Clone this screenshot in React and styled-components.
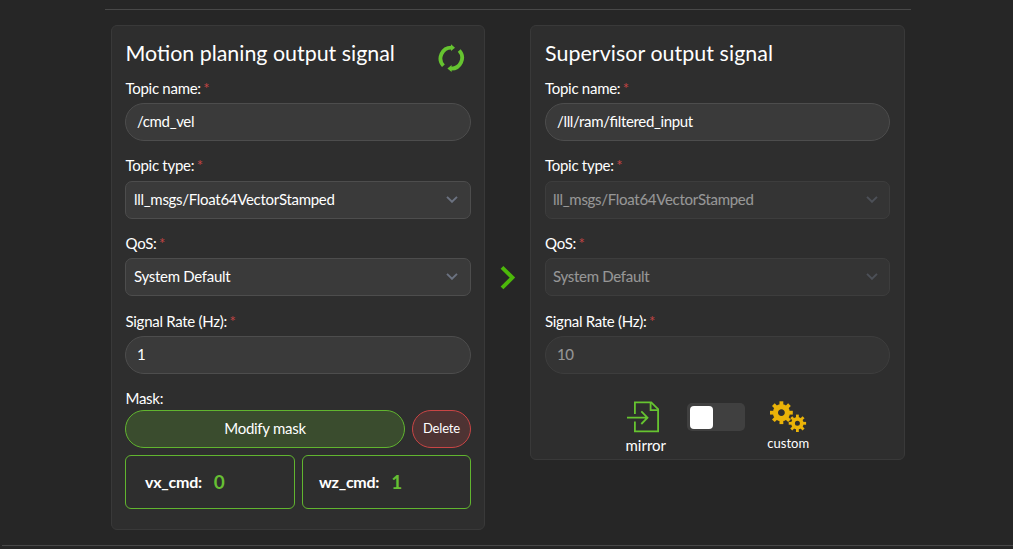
import React from "react";
import styled, { createGlobalStyle, css } from "styled-components";

const GlobalStyle = createGlobalStyle`
  * { box-sizing: border-box; }
  body {
    margin: 0;
    background: #262626;
    color: #fff;
    font-family: Lato, "Open Sans", sans-serif;
    font-size: 15px;
    font-feature-settings: "liga" 1;
    overflow: hidden;
  }
`;

const Page = styled.main`
  height: 549px;
  padding-top: 9px;
  display: flex;
  flex-direction: column;
`;

const Rule = styled.hr`
  flex: none;
  width: 806px;
  height: 1px;
  margin: 0 0 0 105px;
  border: 0;
  background: #484848;
`;

const BottomRule = styled(Rule)`
  width: auto;
  margin: 15px 0 0 2px;
`;

const Columns = styled.div`
  display: flex;
  align-items: flex-start;
  margin: 15px 0 0 111px;
`;

const Panel = styled.section`
  width: ${(p) => p.$width}px;
  height: ${(p) => p.$height}px;
  padding: 13px ${(p) => (p.$flush ? 14 : 13)}px;
  border: 1px solid #393939;
  border-radius: 6px;
  background: #2e2e2e;
`;

const PanelHeader = styled.header`
  display: flex;
  justify-content: space-between;
  height: 39.7px;
  padding-right: 6px;
`;

const Title = styled.h2`
  margin: 0 0 0 ${(p) => (p.$flush ? 0 : 0.5)}px;
  font-size: 21.4px;
  font-weight: 400;
  line-height: 29px;
  letter-spacing: ${(p) => (p.$flush ? 0.06 : 0)}px;
  white-space: nowrap;
`;

const RefreshButton = styled.button`
  margin: 5px 0 0;
  padding: 0;
  border: 0;
  width: 27px;
  height: 28px;
  background: none;
  svg { display: block; }
`;

const Field = styled.div`
  height: 77.65px;
`;

const Label = styled.label`
  display: block;
  height: 24.3px;
  line-height: 18px;
  padding-left: ${(p) => (p.$flush ? 0 : 0.5)}px;
  letter-spacing: -0.28px;
`;

const Required = styled.span`
  margin-left: -1px;
  color: #c24444;
`;

const control = css`
  display: flex;
  align-items: center;
  width: 100%;
  height: 38px;
  border: 1px solid #4d4d4d;
  background: #3a3a3a;
  color: #fff;
  font: inherit;
  font-feature-settings: "liga" 1;
  opacity: ${(p) => (p.$disabled ? 0.5 : 1)};
`;

const TextBox = styled.div`
  ${control}
  padding: 0 11px 1px;
  border-radius: 19px;
  letter-spacing: -0.34px;
`;

const SelectBox = styled.div`
  ${control}
  justify-content: space-between;
  padding: 0 ${(p) => (p.$disabled ? 11 : 12)}px 1.8px ${(p) => (p.$disabled ? 7 : 8)}px;
  border-radius: 7px;
  letter-spacing: -0.29px;
`;

const ArrowColumn = styled.div`
  width: 45px;
  display: flex;
  justify-content: center;
  padding-top: 240px;
`;

const MaskLabel = styled.div`
  height: 20.7px;
  line-height: 18px;
  padding-left: 0.5px;
  letter-spacing: -0.28px;
`;

const MaskActions = styled.div`
  display: flex;
  gap: 7px;
`;

const PillButton = styled.button`
  flex: ${(p) => (p.$danger ? "0 0 59px" : "1")};
  height: 38px;
  padding: 0 0 2px;
  border: 1px solid ${(p) => (p.$danger ? "#c94545" : "#61b52f")};
  border-radius: 19px;
  background: ${(p) => (p.$danger ? "#4e3333" : "#3a4c2e")};
  color: #fff;
  font-family: inherit;
  font-size: ${(p) => (p.$danger ? 13 : 15)}px;
  letter-spacing: ${(p) => (p.$danger ? -0.15 : -0.28)}px;
`;

const MaskValues = styled.div`
  display: grid;
  grid-template-columns: 170px 169px;
  gap: 7px;
  margin-top: 7px;
`;

const MaskCard = styled.div`
  display: flex;
  align-items: center;
  height: 54px;
  padding-left: ${(p) => p.$inset}px;
  border: 1px solid #61b52f;
  border-radius: 6px;
  font-size: 16px;
  font-weight: 700;
  letter-spacing: -0.25px;
`;

const MaskNumber = styled.span`
  margin: -1px 0 0 12px;
  color: #66bf33;
  font-size: 19px;
`;

const ModeRow = styled.div`
  display: flex;
  align-items: flex-start;
  justify-content: center;
  padding: 10px 1px 0 0;
`;

const Mode = styled.div`
  display: flex;
  flex-direction: column;
  align-items: center;
  gap: ${(p) => p.$gap}px;
  width: 42px;
  padding-top: 2px;
  font-size: ${(p) => p.$size}px;
  line-height: 18px;
  svg { display: block; flex: none; }
  svg.mirror { margin-right: 6px; }
`;

const Switch = styled.div`
  width: 58px;
  height: 28px;
  margin: 4px 22px 0 20.5px;
  padding: 3px;
  border-radius: 5px;
  background: #404040;
`;

const Knob = styled.div`
  width: 23px;
  height: 23px;
  border-radius: 4px;
  background: #fff;
`;

function Chevron() {
  return (
    <svg width="12" height="8" viewBox="0 0 12 8" fill="none" stroke="#6b7280" strokeWidth="1.9">
      <path d="M1 1.9 6 6.8 11 1.9" />
    </svg>
  );
}

function RefreshIcon() {
  return (
    <svg width="27" height="28" viewBox="0 0 27 28">
      <g fill="none" stroke="#66c430" strokeWidth="3.8">
        <path d="M5.4 21.7A10.8 10.8 0 0 1 13.8 3.6" />
        <path d="M21.2 6.5A10.8 10.8 0 0 1 12.8 24.6" />
      </g>
      <path fill="#66c430" d="M13 .2 17 3.7 13 7.1ZM13.6 21.1 9.4 24.6 13.6 28Z" />
    </svg>
  );
}

function MirrorIcon() {
  return (
    <svg className="mirror" width="34" height="32" viewBox="0 0 34 32" fill="none" stroke="#66c430" strokeWidth="1.8">
      <path d="M8.9 13V1.3H25.2L32.1 8.2V30.4H8.9V20.5" />
      <path d="M24.6 1.3V9.1H32.1" />
      <path d="M1 16.7H21.5M15.3 10.4 21.5 16.7 15.3 23" />
    </svg>
  );
}

function Gear({ cx, cy, body, outer, hole, tooth }) {
  const ring = (body + hole) / 2;
  return (
    <g transform={`translate(${cx} ${cy})`}>
      <circle r={ring} fill="none" stroke="#eab308" strokeWidth={body - hole} />
      {[0, 45, 90, 135, 180, 225, 270, 315].map((angle) => (
        <rect
          key={angle}
          x={-tooth / 2}
          y={-outer}
          width={tooth}
          height={outer - body + 1}
          fill="#eab308"
          transform={`rotate(${angle})`}
        />
      ))}
    </g>
  );
}

function GearsIcon() {
  return (
    <svg width="37" height="32" viewBox="0 0 37 32">
      <Gear cx={11.4} cy={11.7} body={8.6} outer={11.4} hole={3.4} tooth={3.8} />
      <Gear cx={27.4} cy={22.3} body={6.2} outer={8.7} hole={2.5} tooth={2.8} />
    </svg>
  );
}

function FormField({ label, value, select, disabled, flush }) {
  const Control = select ? SelectBox : TextBox;
  return (
    <Field>
      <Label $flush={flush}>
        {label} <Required>*</Required>
      </Label>
      <Control $disabled={disabled}>
        {value}
        {select && <Chevron />}
      </Control>
    </Field>
  );
}

export default function App() {
  return (
    <Page>
      <GlobalStyle />
      <Rule />
      <Columns>
        <Panel $width={374} $height={505}>
          <PanelHeader>
            <Title>Motion planing output signal</Title>
            <RefreshButton aria-label="Refresh">
              <RefreshIcon />
            </RefreshButton>
          </PanelHeader>
          <FormField label="Topic name:" value="/cmd_vel" />
          <FormField label="Topic type:" value="lll_msgs/Float64VectorStamped" select />
          <FormField label="QoS:" value="System Default" select />
          <FormField label="Signal Rate (Hz):" value="1" />
          <MaskLabel>Mask:</MaskLabel>
          <MaskActions>
            <PillButton>Modify mask</PillButton>
            <PillButton $danger>Delete</PillButton>
          </MaskActions>
          <MaskValues>
            <MaskCard $inset={19}>
              vx_cmd:<MaskNumber>0</MaskNumber>
            </MaskCard>
            <MaskCard $inset={16}>
              wz_cmd:<MaskNumber>1</MaskNumber>
            </MaskCard>
          </MaskValues>
        </Panel>
        <ArrowColumn>
          <svg width="16" height="25" viewBox="0 0 16 25" fill="none" stroke="#4cb80a" strokeWidth="3.9">
            <path d="M2 2.3 12.4 12.6 2 22.9" />
          </svg>
        </ArrowColumn>
        <Panel $width={375} $height={435} $flush>
          <PanelHeader>
            <Title $flush>Supervisor output signal</Title>
          </PanelHeader>
          <FormField label="Topic name:" value="/lll/ram/filtered_input" flush />
          <FormField label="Topic type:" value="lll_msgs/Float64VectorStamped" select disabled flush />
          <FormField label="QoS:" value="System Default" select disabled flush />
          <FormField label="Signal Rate (Hz):" value="10" disabled flush />
          <ModeRow>
            <Mode $size={15} $gap={3}>
              <MirrorIcon />
              mirror
            </Mode>
            <Switch>
              <Knob />
            </Switch>
            <Mode $size={13} $gap={1}>
              <GearsIcon />
              custom
            </Mode>
          </ModeRow>
        </Panel>
      </Columns>
      <BottomRule />
    </Page>
  );
}
